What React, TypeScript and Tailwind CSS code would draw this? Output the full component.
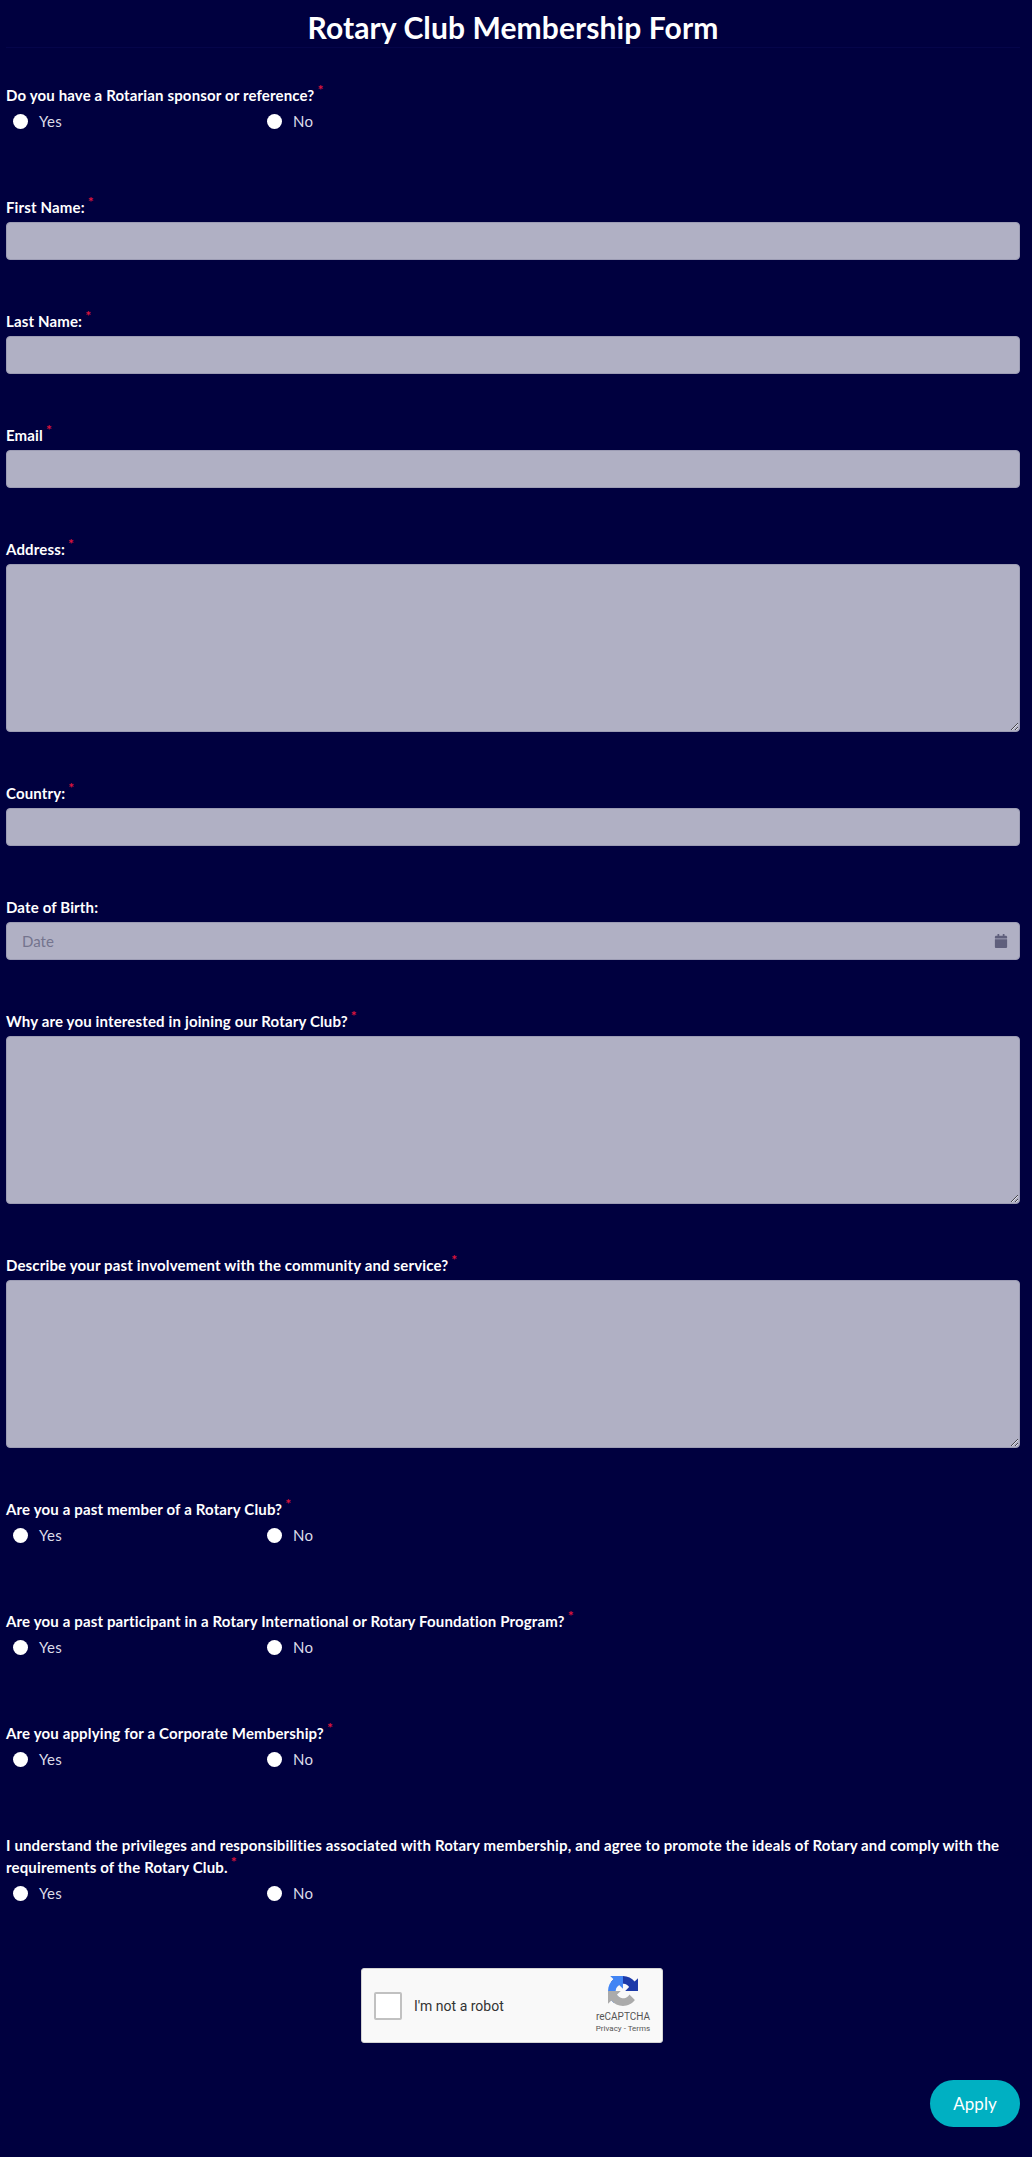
import React from "react";
import { FaCalendar } from "react-icons/fa";

function Label({ text, req = true }: { text: React.ReactNode; req?: boolean }) {
  return (
    <label className="block text-[15px] leading-[22px] font-bold tracking-[0.15px] text-white mb-1">
      {text}
      {req && <span className="text-[#dc143c] text-[14px] font-bold align-super leading-[0] ml-[3px]">*</span>}
    </label>
  );
}

function Radios({ text, cls = "mt-[64px]" }: { text: React.ReactNode; cls?: string }) {
  return (
    <div className={cls}>
      <Label text={text} />
      <div className="flex h-[22px] items-center pl-[7px]">
        {["Yes", "No"].map((o) => (
          <label key={o} className="flex items-center w-[254px]">
            <span className="block w-[15px] h-[15px] rounded-full bg-white" />
            <span className="ml-[11px] text-[15px] leading-[22px] tracking-[0.3px] text-[#dcdce8]">{o}</span>
          </label>
        ))}
      </div>
    </div>
  );
}

const box = "block w-full bg-[#b0b0c4] rounded-[4px] border border-[#9c9cb4] outline-none";

function Input({ text, req = true, cls = "mt-[50px]" }: { text: string; req?: boolean; cls?: string }) {
  return (
    <div className={cls}>
      <Label text={text} req={req} />
      <input type="text" className={box + " h-[38px]"} />
    </div>
  );
}

function Area({ text }: { text: string }) {
  return (
    <div className="mt-[50px]">
      <Label text={text} />
      <textarea className={box + " h-[168px] resize-y"} />
    </div>
  );
}

export default function App() {
  return (
    <div className="min-h-[2157px] bg-[#00003f] pl-[6px] pr-[12px] font-['Lato','Open_Sans',sans-serif]">
      <h1 className="h-[48px] border-b border-[#05054a] text-center text-[30px] leading-[54px] font-bold tracking-[0.1px] text-white">
        Rotary Club Membership Form
      </h1>
      <Radios text="Do you have a Rotarian sponsor or reference?" cls="mt-[36px]" />
      <Input text="First Name:" cls="mt-[64px]" />
      <Input text="Last Name:" />
      <Input text="Email" />
      <Area text="Address:" />
      <Input text="Country:" />
      <div className="mt-[50px]">
        <Label text="Date of Birth:" req={false} />
        <div className="relative">
          <input
            type="text"
            placeholder="Date"
            className={box + " h-[38px] pl-[15px] text-[15px] placeholder:text-[#74748e]"}
          />
          <FaCalendar className="absolute right-[12px] top-[12px] text-[14px] text-[#5f5f7c]" />
        </div>
      </div>
      <Area text="Why are you interested in joining our Rotary Club?" />
      <Area text="Describe your past involvement with the community and service?" />
      <Radios text="Are you a past member of a Rotary Club?" cls="mt-[50px]" />
      <Radios text="Are you a past participant in a Rotary International or Rotary Foundation Program?" />
      <Radios text="Are you applying for a Corporate Membership?" />
      <Radios text="I understand the privileges and responsibilities associated with Rotary membership, and agree to promote the ideals of Rotary and comply with the requirements of the Rotary Club." />
      <div className="mt-[64px] ml-[355px] flex h-[75px] w-[302px] items-start rounded-[3px] border border-[#d3d3d3] bg-[#f9f9f9] pl-[12px] font-['Roboto',sans-serif]">
        <span className="mt-[23px] block h-[28px] w-[28px] rounded-[2px] border-2 border-[#c1c1c1] bg-white" />
        <span className="ml-[12px] mt-[26px] text-[14px] leading-[22px] text-[#333]">I'm not a robot</span>
        <div className="ml-auto mr-[4px] mt-[7px] flex w-[70px] flex-col items-center">
          <svg width="30" height="30" viewBox="0 0 64 64">
            <path fill="#1c3aa9" d="M64 31.955l-.033-1.37V4.687l-7.16 7.16C50.948 4.674 42.033.093 32.05.093c-10.4 0-19.622 4.96-25.458 12.64l11.736 11.86a15.55 15.55 0 0 1 4.75-5.33c2.05-1.6 4.952-2.908 8.972-2.908.486 0 .86.057 1.136.163 4.98.393 9.3 3.142 11.845 7.132l-8.307 8.307 26.276-.003" />
            <path fill="#4285f4" d="M31.957.002l-1.37.033H4.687l7.16 7.16C4.674 13.053.093 21.968.093 31.95c0 10.4 4.96 19.622 12.64 25.458l11.86-11.736a15.55 15.55 0 0 1-5.33-4.75c-1.6-2.05-2.908-4.952-2.908-8.972 0-.486.057-.86.163-1.136.393-4.98 3.142-9.3 7.132-11.845l8.307 8.307L31.957.002" />
            <path fill="#ababab" d="M.002 31.955l.033 1.37v25.9l7.16-7.16c5.857 7.173 14.772 11.754 24.754 11.754 10.4 0 19.622-4.96 25.458-12.64l-11.736-11.86a15.55 15.55 0 0 1-4.75 5.33c-2.05 1.6-4.952 2.908-8.972 2.908-.486 0-.86-.057-1.136-.163-4.98-.393-9.3-3.142-11.845-7.132l8.307-8.307-26.276.003" />
          </svg>
          <span className="mt-[5px] text-[10px] leading-[12px] text-[#555]">reCAPTCHA</span>
          <span className="mt-[1px] text-[8px] leading-[10px] text-[#555]">Privacy - Terms</span>
        </div>
      </div>
      <div className="mt-[37px] flex justify-end">
        <button className="h-[47px] w-[90px] rounded-full bg-[#00b0c2] text-[17px] text-white">Apply</button>
      </div>
    </div>
  );
}
